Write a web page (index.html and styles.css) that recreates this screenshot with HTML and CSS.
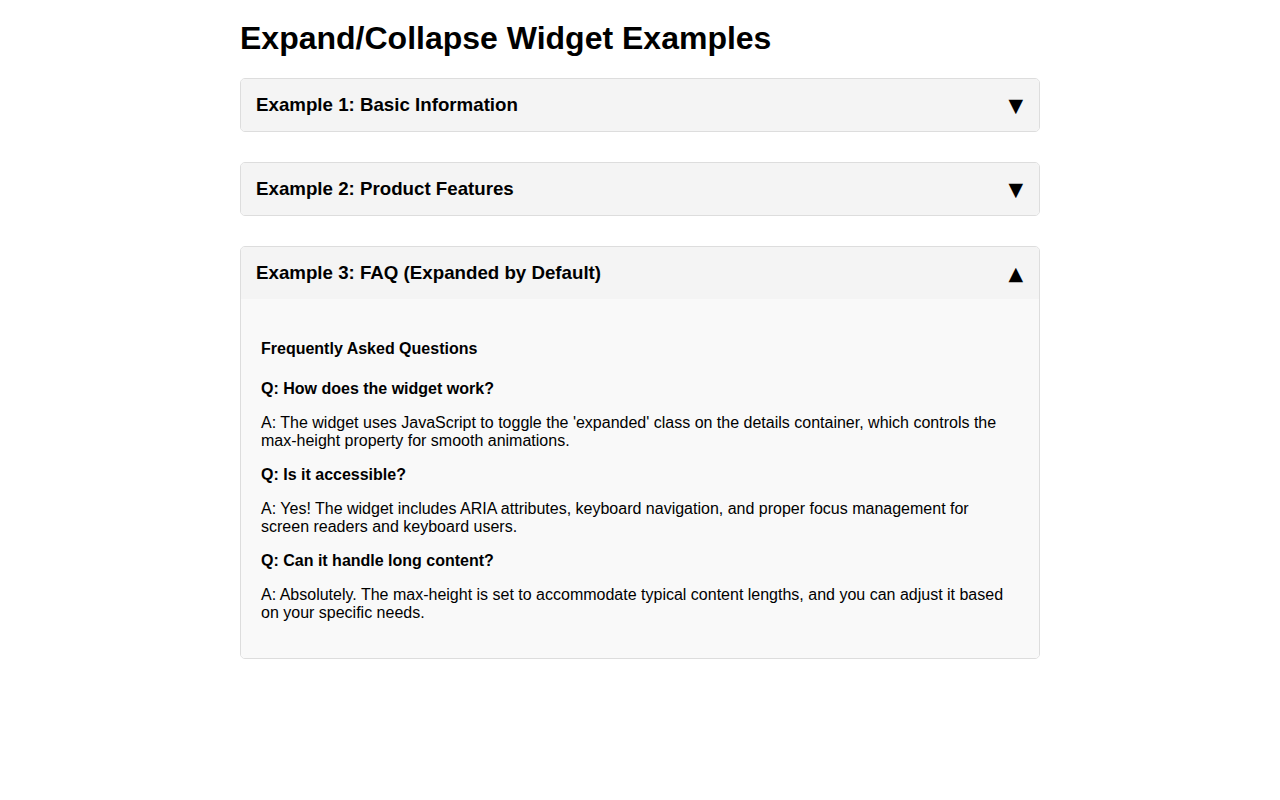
FILE: index.html
```html
<!DOCTYPE html>
<html lang="en">
<head>
<meta charset="utf-8">
<title>Expand/Collapse Widget Examples</title>
<link rel="stylesheet" href="styles.css">
</head>
<body>
<main class="page">
  <h1 class="page-title">Expand/Collapse Widget Examples</h1>

  <section class="widget">
    <button class="widget-header" aria-expanded="false" aria-controls="details-1">
      <span class="widget-title">Example 1: Basic Information</span>
      <span class="widget-arrow" aria-hidden="true">▼</span>
    </button>
  </section>

  <section class="widget">
    <button class="widget-header" aria-expanded="false" aria-controls="details-2">
      <span class="widget-title">Example 2: Product Features</span>
      <span class="widget-arrow" aria-hidden="true">▼</span>
    </button>
  </section>

  <section class="widget expanded">
    <button class="widget-header" aria-expanded="true" aria-controls="details-3">
      <span class="widget-title">Example 3: FAQ (Expanded by Default)</span>
      <span class="widget-arrow" aria-hidden="true">▲</span>
    </button>
    <div class="widget-details" id="details-3">
      <h4>Frequently Asked Questions</h4>
      <p><strong>Q: How does the widget work?</strong></p>
      <p>A: The widget uses JavaScript to toggle the 'expanded' class on the details container, which controls the max-height property for smooth animations.</p>
      <p><strong>Q: Is it accessible?</strong></p>
      <p>A: Yes! The widget includes ARIA attributes, keyboard navigation, and proper focus management for screen readers and keyboard users.</p>
      <p><strong>Q: Can it handle long content?</strong></p>
      <p>A: Absolutely. The max-height is set to accommodate typical content lengths, and you can adjust it based on your specific needs.</p>
    </div>
  </section>
</main>
</body>
</html>
```

FILE: styles.css
```css
html, body {
  margin: 0;
  padding: 0;
  background: #fff;
}

body {
  font-family: "Liberation Sans", Arial, sans-serif;
  font-size: 16px;
  color: #000;
}

.page {
  width: 800px;
  margin: 0 auto;
  padding: 20px 0 40px;
}

.page-title {
  font-size: 32px;
  font-weight: bold;
  margin: 0 0 21px;
  line-height: 37px;
}

.widget {
  border: 1px solid #ddd;
  border-radius: 5px;
  overflow: hidden;
  margin-bottom: 30px;
}

.widget-header {
  display: flex;
  align-items: center;
  justify-content: space-between;
  width: 100%;
  box-sizing: border-box;
  padding: 15px;
  border: 0;
  background: #f4f4f4;
  font-family: inherit;
  font-size: 18.72px;
  font-weight: bold;
  line-height: 22px;
  color: #000;
  text-align: left;
  cursor: pointer;
}

.widget-arrow {
  font-family: "DejaVu Sans", sans-serif;
  font-size: 19px;
  font-weight: normal;
  line-height: 22px;
  margin-right: 1px;
  margin-top: -1px;
}

.widget-details {
  background: #f9f9f9;
  padding: 20px;
}

.widget-details h4 {
  font-size: 16px;
  margin: 21.28px 0;
}

.widget-details p {
  margin: 16px 0;
}
```
